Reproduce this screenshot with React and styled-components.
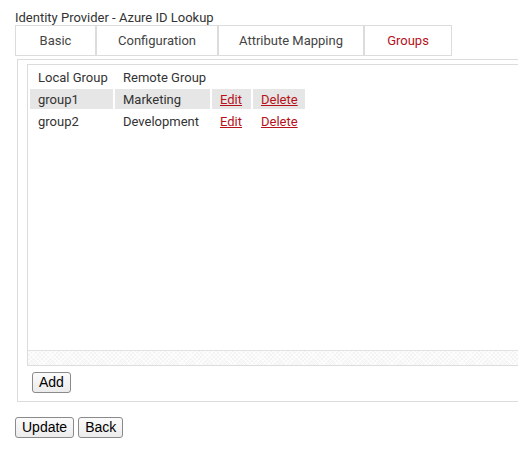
import styled, { createGlobalStyle } from "styled-components";

const Global = createGlobalStyle`
  html, body {
    margin: 0;
    padding: 0;
    background: #fff;
    overflow: hidden;
  }
`;

const Page = styled.div`
  font-family: Roboto, "Liberation Sans", sans-serif;
  font-size: 13px;
  color: #333;
  padding: 10px 0 0 15px;
  width: 620px;
`;

const Title = styled.div`
  line-height: 15px;
  height: 15px;
`;

const Tabs = styled.div`
  display: flex;
  width: fit-content;
  border: 1px solid #dcdcdc;
`;

const Tab = styled.div`
  box-sizing: border-box;
  width: ${(p) => p.$w}px;
  height: 29px;
  line-height: 29px;
  text-align: center;
  color: ${(p) => (p.$active ? "#b5121b" : "#444")};
  border-left: ${(p) => (p.$first ? "none" : "2px solid #dcdcdc")};
  white-space: nowrap;
`;

const Panel = styled.div`
  margin: 3px 0 0 2px;
  border: 1px solid #dcdcdc;
  padding: 4px 0 8px 9px;
`;

const Frame = styled.div`
  border: 1px solid #dcdcdc;
  height: 300px;
  display: flex;
  flex-direction: column;
`;

const Scroll = styled.div`
  flex: 1;
`;

const Strip = styled.div`
  height: 14px;
  border-top: 1px solid #e2e2e2;
  background-color: #f4f4f4;
  background-image: repeating-linear-gradient(
      45deg,
      rgba(255, 255, 255, 0.7) 0 1px,
      transparent 1px 3px
    ),
    repeating-linear-gradient(
      -45deg,
      rgba(255, 255, 255, 0.7) 0 1px,
      transparent 1px 3px
    );
`;

const Table = styled.table`
  border-collapse: separate;
  border-spacing: 2px;
  font-size: 13px;
  color: #333;
`;

const Cell = styled.td`
  height: 20px;
  padding: 0 0 0 8px;
  background: ${(p) => (p.$shade ? "#e6e6e6" : "transparent")};
  white-space: nowrap;
`;

const Head = styled.th`
  box-sizing: border-box;
  width: ${(p) => p.$w}px;
  min-width: ${(p) => p.$w}px;
  height: 20px;
  padding: 0 0 0 8px;
  font-weight: normal;
  text-align: left;
  white-space: nowrap;
`;

const Link = styled.a`
  color: #b5121b;
  text-decoration: underline;
  cursor: pointer;
`;

const Button = styled.button`
  font-family: "Liberation Sans", Arial, sans-serif;
  font-size: 14px;
  color: #000;
  height: 21px;
  padding: 0 6px;
  background: linear-gradient(#fbfbfb, #ececec);
  border: 1px solid #8a8a8a;
  border-radius: 3px;
  line-height: 19px;
`;

const AddRow = styled.div`
  display: flex;
  padding: 6px 0 0 5px;
`;

const Actions = styled.div`
  display: flex;
  gap: 4px;
  margin-top: 15px;
`;

const rows = [
  { local: "group1", remote: "Marketing", shade: true },
  { local: "group2", remote: "Development", shade: false },
];

const tabs = [
  { label: "Basic", w: 79 },
  { label: "Configuration", w: 122 },
  { label: "Attribute Mapping", w: 146 },
  { label: "Groups", w: 88, active: true },
];

export default function App() {
  return (
    <Page>
      <Global />
      <Title>Identity Provider - Azure ID Lookup</Title>
      <Tabs>
        {tabs.map((t, i) => (
          <Tab key={t.label} $w={t.w} $active={t.active} $first={i === 0}>
            {t.label}
          </Tab>
        ))}
      </Tabs>
      <Panel>
        <Frame>
          <Scroll>
            <Table>
              <thead>
                <tr>
                  <Head $w={83}>Local Group</Head>
                  <Head $w={95}>Remote Group</Head>
                  <Head $w={39} />
                  <Head $w={52} />
                </tr>
              </thead>
              <tbody>
                {rows.map((r) => (
                  <tr key={r.local}>
                    <Cell $shade={r.shade}>{r.local}</Cell>
                    <Cell $shade={r.shade}>{r.remote}</Cell>
                    <Cell $shade={r.shade}>
                      <Link>Edit</Link>
                    </Cell>
                    <Cell $shade={r.shade}>
                      <Link>Delete</Link>
                    </Cell>
                  </tr>
                ))}
              </tbody>
            </Table>
          </Scroll>
          <Strip />
        </Frame>
        <AddRow>
          <Button>Add</Button>
        </AddRow>
      </Panel>
      <Actions>
        <Button>Update</Button>
        <Button>Back</Button>
      </Actions>
    </Page>
  );
}
